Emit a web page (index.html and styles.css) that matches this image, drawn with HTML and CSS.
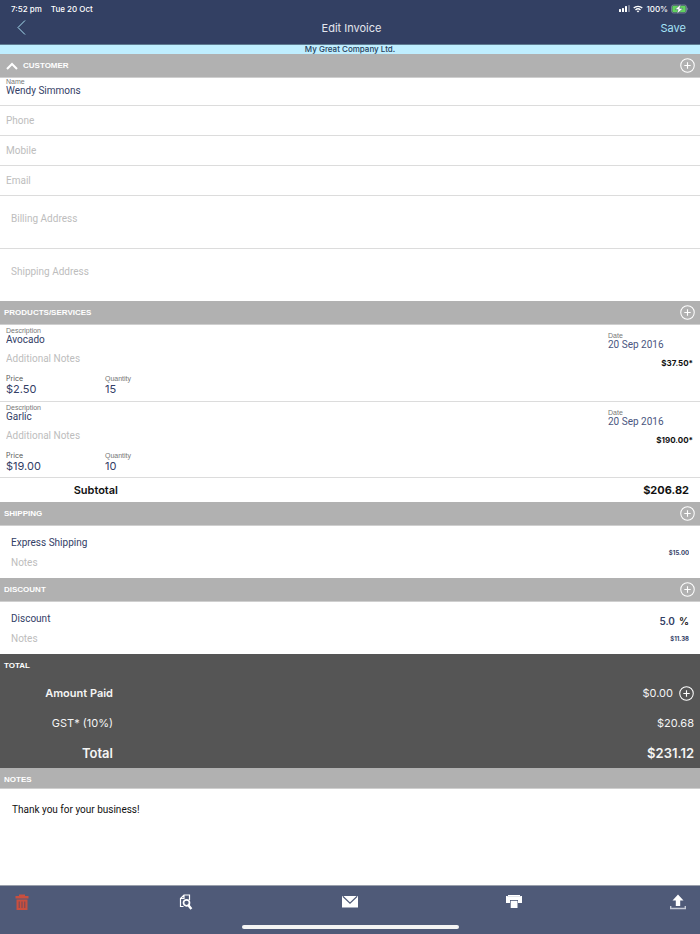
FILE: index.html
```html
<!DOCTYPE html>
<html lang="en">
<head>
    <meta charset="UTF-8">
    <meta name="viewport" content="width=device-width, initial-scale=1.0">
    <title>Edit Invoice</title>
    <link rel="stylesheet" href="styles.css">
</head>
<body>
    <!-- Shared icons -->
    <svg class="sprite" aria-hidden="true">
        <symbol id="icon-add" viewBox="0 0 16 16">
            <circle cx="8" cy="8" r="7.2" fill="none" stroke="currentColor" stroke-width="1.1"/>
            <path d="M8 4.6v6.8M4.6 8h6.8" stroke="currentColor" stroke-width="1.2"/>
        </symbol>
    </svg>

    <header class="header">
        <div class="status-bar">
            <span>7:52 pm</span>
            <span>Tue 20 Oct</span>
            <div class="status-right">
                <svg width="11" height="7" viewBox="0 0 11 7" fill="#fff">
                    <rect x="0" y="4" width="2" height="3" rx=".5"/>
                    <rect x="3" y="3" width="2" height="4" rx=".5"/>
                    <rect x="6" y="1" width="2" height="6" rx=".5"/>
                    <rect x="9" y="0" width="2" height="7" rx=".5" opacity=".3"/>
                </svg>
                <svg width="10" height="8" viewBox="0 0 10 8" fill="none" stroke="#fff" stroke-width="1.4">
                    <path d="M.7 3.1a6.1 6.1 0 0 1 8.6 0M2.5 4.9a3.6 3.6 0 0 1 5 0"/>
                    <path d="M5 7.6 3.7 6.2a1.9 1.9 0 0 1 2.6 0z" fill="#fff" stroke="none"/>
                </svg>
                <span>100%</span>
                <svg width="18" height="10" viewBox="0 0 18 10">
                    <rect x=".5" y="1" width="15" height="8" rx="2" fill="none" stroke="#8b93a8" stroke-width=".7"/>
                    <rect x="1.3" y="1.8" width="13.4" height="6.4" rx="1.2" fill="#62d35f"/>
                    <path d="M16.4 3.6c1 .4 1 2.4 0 2.8z" fill="#8b93a8"/>
                    <path d="M9.8.2 4 5.6h3.2L6 9.8l6-5.400H8.700z" fill="#fff" stroke="#334063" stroke-width=".4"/>
                </svg>
            </div>
        </div>
        <nav class="nav">
            <button type="button" class="back" aria-label="Back">
                <svg width="9" height="15" viewBox="0 0 9 15" fill="none" stroke="#a6dcf0"><path d="M8 .5 1 7.5l7 7"/></svg>
            </button>
            <h1>Edit Invoice</h1>
            <button type="submit" form="invoice" class="save">Save</button>
        </nav>
    </header>
    <div class="company">My Great Company Ltd.</div>

    <form id="invoice" class="invoice">
        <section>
            <div class="section-head">
                <button type="button" class="collapse" aria-label="Collapse customer">
                    <svg width="12" height="8" viewBox="0 0 12 8" fill="none" stroke="#fff" stroke-width="2"><path d="m1 7 5-5 5 5"/></svg>
                </button>
                <h2>CUSTOMER</h2>
                <button type="button" class="add" aria-label="Add customer"><svg><use href="#icon-add"/></svg></button>
            </div>
            <div class="row name-row">
                <label for="name">Name</label>
                <input type="text" id="name" value="Wendy Simmons">
            </div>
            <div class="row"><input type="tel" placeholder="Phone" aria-label="Phone"></div>
            <div class="row"><input type="tel" placeholder="Mobile" aria-label="Mobile"></div>
            <div class="row"><input type="email" placeholder="Email" aria-label="Email"></div>
            <div class="row address"><textarea rows="2" placeholder="Billing Address" aria-label="Billing Address"></textarea></div>
            <div class="row address"><textarea rows="2" placeholder="Shipping Address" aria-label="Shipping Address"></textarea></div>
        </section>

        <section>
            <div class="section-head">
                <h2>PRODUCTS/SERVICES</h2>
                <button type="button" class="add" aria-label="Add product"><svg><use href="#icon-add"/></svg></button>
            </div>
            <div class="item">
                <div class="item-main">
                    <label for="desc1">Description</label>
                    <input type="text" id="desc1" value="Avocado">
                    <input type="text" class="item-notes" placeholder="Additional Notes" aria-label="Additional Notes">
                    <div class="item-numbers">
                        <div class="field">
                            <label for="price1" class="price-label">Price</label>
                            <input type="text" id="price1" value="$2.50">
                        </div>
                        <div class="field">
                            <label for="qty1">Quantity</label>
                            <input type="text" id="qty1" value="15">
                        </div>
                    </div>
                </div>
                <div class="item-side">
                    <label for="date1">Date</label>
                    <input type="text" id="date1" value="20 Sep 2016">
                    <output class="item-amount">$37.50*</output>
                </div>
            </div>
            <div class="item">
                <div class="item-main">
                    <label for="desc2">Description</label>
                    <input type="text" id="desc2" value="Garlic">
                    <input type="text" class="item-notes" placeholder="Additional Notes" aria-label="Additional Notes">
                    <div class="item-numbers">
                        <div class="field">
                            <label for="price2" class="price-label">Price</label>
                            <input type="text" id="price2" value="$19.00">
                        </div>
                        <div class="field">
                            <label for="qty2">Quantity</label>
                            <input type="text" id="qty2" value="10">
                        </div>
                    </div>
                </div>
                <div class="item-side">
                    <label for="date2">Date</label>
                    <input type="text" id="date2" value="20 Sep 2016">
                    <output class="item-amount">$190.00*</output>
                </div>
            </div>
            <div class="subtotal">
                <span class="subtotal-label">Subtotal</span>
                <output>$206.82</output>
            </div>
        </section>

        <section>
            <div class="section-head">
                <h2>SHIPPING</h2>
                <button type="button" class="add" aria-label="Add shipping"><svg><use href="#icon-add"/></svg></button>
            </div>
            <div class="extra">
                <div class="extra-text">
                    <input type="text" value="Express Shipping" aria-label="Shipping">
                    <input type="text" placeholder="Notes" aria-label="Shipping notes">
                </div>
                <input type="text" class="small-amount" value="$15.00" aria-label="Shipping cost">
            </div>
        </section>

        <section>
            <div class="section-head">
                <h2>DISCOUNT</h2>
                <button type="button" class="add" aria-label="Add discount"><svg><use href="#icon-add"/></svg></button>
            </div>
            <div class="extra">
                <div class="extra-text">
                    <input type="text" value="Discount" aria-label="Discount">
                    <input type="text" placeholder="Notes" aria-label="Discount notes">
                </div>
                <div class="discount-values">
                    <div class="percent"><input type="text" value="5.0" aria-label="Discount percent"><span>%</span></div>
                    <output class="small-amount">$11.38</output>
                </div>
            </div>
        </section>

        <section class="total">
            <h2>TOTAL</h2>
            <div class="total-row">
                <span class="total-label medium">Amount Paid</span>
                <output>$0.00</output>
                <button type="button" class="add" aria-label="Add payment"><svg><use href="#icon-add"/></svg></button>
            </div>
            <div class="total-row">
                <span class="total-label">GST* (10%)</span>
                <output>$20.68</output>
            </div>
            <div class="total-row grand">
                <span class="total-label">Total</span>
                <output>$231.12</output>
            </div>
        </section>

        <section class="notes">
            <div class="section-head notes-head"><h2><label for="notes">NOTES</label></h2></div>
            <textarea id="notes">Thank you for your business!</textarea>
        </section>
    </form>

    <footer class="footer">
        <div class="toolbar">
            <button type="button" aria-label="Delete">
                <svg width="16" height="16" viewBox="0 0 16 16">
                    <path d="M5 .5h6V2h3.500v2.500h-13V2H5z" fill="#c94f3f"/>
                    <path d="M2.500 5.500h11V16h-11z" fill="#c94f3f"/>
                    <path d="M5.200 7.500V14M8 7.500V14M10.800 7.500V14" stroke="#6d4a5c" stroke-width="1"/>
                </svg>
            </button>
            <button type="button" aria-label="Preview">
                <svg width="16" height="16" viewBox="0 0 16 16" fill="none" stroke="#fff">
                    <path d="M5.500 12.500h-3V4.500L6 1h5.500v5M2.500 4.500H6V1" stroke-width="1.200"/>
                    <circle cx="8.500" cy="8.800" r="3" stroke-width="1.700"/>
                    <path d="m10.400 11.200 3 3.800" stroke-width="2.400"/>
                </svg>
            </button>
            <button type="button" aria-label="Email">
                <svg width="16" height="16" viewBox="0 0 16 16">
                    <path d="M0 2h16v11.500H0z" fill="#fff"/>
                    <path d="m.8 2.200 7.200 7 7.200-7" fill="none" stroke="#4f5a78" stroke-width="1.200"/>
                </svg>
            </button>
            <button type="button" aria-label="Print">
                <svg width="16" height="16" viewBox="0 0 16 16" fill="#fff">
                    <path d="M2 1h12v1h2v7h-4V6H4v3H0V2h2z"/>
                    <path d="M4.700 6.800h6.800v7.200H4.700z"/>
                    <path d="M1 2.500h14" stroke="#c5cad6" stroke-width=".5"/>
                </svg>
            </button>
            <button type="button" aria-label="Share">
                <svg width="16" height="16" viewBox="0 0 16 16">
                    <path d="m8 .5 5.500 6H10.200V12H5.800V6.500H2.500z" fill="#fff"/>
                    <path d="M.7 12v2.500h14.600V12" fill="none" stroke="#c5cad6" stroke-width="1.400"/>
                </svg>
            </button>
        </div>
        <div class="home-bar"></div>
    </footer>
</body>
</html>
```
FILE: styles.css
```css
* {
    box-sizing: border-box;
}
body {
    margin: 0;
    min-height: 100vh;
    display: flex;
    flex-direction: column;
    background: #fff;
    color: #111;
    font-family: Inter, "Liberation Sans", sans-serif;
    font-size: 10px;
    line-height: 12px;
}
h1, h2 {
    margin: 0;
}
button {
    display: flex;
    align-items: center;
    padding: 0;
    border: none;
    background: none;
    font: inherit;
    cursor: pointer;
}
input, textarea {
    display: block;
    width: 100%;
    padding: 0;
    border: none;
    background: none;
    color: #334066;
    font-family: Roboto, "Liberation Sans", sans-serif;
    font-size: 10px;
    line-height: 12px;
    outline: none;
    resize: none;
}
input {
    height: 12px;
}
::placeholder {
    color: #bdbdbd;
    opacity: 1;
}
label {
    display: block;
    color: #777;
    font-family: "Liberation Sans", Arial, sans-serif;
    font-size: 7px;
    line-height: 7px;
}
.sprite {
    display: none;
}

/* Header */
.header {
    background: #334063;
    color: #fff;
    padding-bottom: 6px;
    border-bottom: 1px solid #5f7d93;
}
.status-bar {
    display: flex;
    align-items: center;
    gap: 9px;
    height: 17px;
    padding: 0 11px;
    font-size: 8px;
    font-weight: 500;
}
.status-right {
    display: flex;
    align-items: center;
    gap: 3px;
    margin-left: auto;
}
.nav {
    display: grid;
    grid-template-columns: 1fr auto 1fr;
    align-items: center;
    height: 21px;
    padding: 0 14px 0 17px;
}
.nav h1 {
    color: #e3e6ee;
    font-size: 11px;
    font-weight: 400;
}
.save {
    justify-self: end;
    color: #a6e3f8;
    font-size: 11px;
}
.company {
    background: #bfeeff;
    color: #26405a;
    font-size: 8px;
    font-weight: 500;
    line-height: 9px;
    text-align: center;
}

/* Sections */
.invoice {
    display: flex;
    flex-direction: column;
    flex: 1;
}
.section-head {
    display: flex;
    align-items: center;
    height: 24px;
    padding: 0 5px 0 4px;
    background: #b1b1b1;
    border-bottom: 1px solid #cfcfcf;
}
h2, h2 label {
    color: #fff;
    font-family: "Liberation Sans", Arial, sans-serif;
    font-size: 8px;
    font-weight: 700;
    line-height: 10px;
}
.collapse {
    margin: 0 5px 0 2px;
}
.add {
    margin-left: auto;
    color: #fff;
}
.add svg {
    width: 15px;
    height: 15px;
}

/* Customer */
.row {
    display: flex;
    flex-direction: column;
    justify-content: center;
    height: 30px;
    padding: 0 6px;
    border-bottom: 1px solid #dcdcdc;
}
.name-row {
    height: 28px;
    justify-content: flex-start;
}
.address {
    height: 53px;
    justify-content: flex-end;
    padding: 0 11px;
}
.address textarea {
    height: 35px;
}
.address:last-child {
    height: 52px;
    border-bottom: none;
}

/* Products */
.item {
    display: flex;
    height: 77px;
    padding: 2px 7px 0 6px;
    border-bottom: 1px solid #dcdcdc;
}
.item + .item {
    height: 76px;
}
.item-main {
    flex: 1;
}
.item-notes {
    margin: 7px 0 10px;
}
.item-numbers {
    display: flex;
    align-items: flex-end;
    gap: 19px;
}
.field {
    width: 80px;
}
.field input {
    height: 13px;
    font-family: Inter, "Liberation Sans", sans-serif;
    font-size: 11px;
}
.price-label {
    color: #555;
    font-family: Inter, "Liberation Sans", sans-serif;
}
.item-side {
    width: 85px;
    padding-top: 5px;
}
.item-side input {
    color: #4a5680;
}
.item-amount {
    display: block;
    margin-top: 6px;
    font-size: 8px;
    font-weight: 700;
    text-align: right;
}
.subtotal {
    display: flex;
    align-items: center;
    justify-content: space-between;
    height: 24px;
    padding-right: 11px;
    font-size: 11px;
    font-weight: 600;
}
.subtotal-label {
    width: 118px;
    text-align: right;
}
.subtotal output {
    font-weight: 700;
}

/* Shipping and discount */
.extra {
    display: flex;
    align-items: center;
    height: 52px;
    padding: 2px 11px 0;
}
.extra-text {
    display: flex;
    flex: 1;
    flex-direction: column;
    gap: 8px;
}
.small-amount {
    width: 60px;
    color: #334066;
    font-family: Inter, "Liberation Sans", sans-serif;
    font-size: 6px;
    font-weight: 700;
    text-align: right;
}
.discount-values {
    display: flex;
    flex-direction: column;
    align-items: flex-end;
    gap: 6px;
    padding-top: 2px;
}
.percent {
    display: flex;
    gap: 4px;
    font-weight: 600;
}
.percent input {
    width: 40px;
    font-family: inherit;
    font-weight: 600;
    text-align: right;
}

/* Total */
.total {
    height: 114px;
    padding: 7px 6px 0 4px;
    background: #555;
    color: #f4f4f4;
}
.total h2 {
    margin-bottom: 7px;
}
.total-row {
    display: flex;
    align-items: center;
    height: 30px;
    font-size: 11px;
}
.total-row output {
    margin-left: auto;
}
.total-row .add {
    margin-left: 6px;
}
.total-label {
    width: 109px;
    text-align: right;
}
.medium {
    font-weight: 600;
}
.grand {
    font-size: 13px;
    font-weight: 600;
}

/* Notes */
.notes {
    display: flex;
    flex: 1;
    flex-direction: column;
}
.notes-head {
    height: 21px;
    padding-top: 3px;
}
.notes textarea {
    flex: 1;
    min-height: 60px;
    padding: 15px 12px;
    color: #111;
}

/* Bottom toolbar */
.footer {
    height: 49px;
    padding-top: 8px;
    background: #4f5a78;
    border-top: 1px solid #9aa0ac;
}
.toolbar {
    display: flex;
    justify-content: space-between;
    padding: 0 14px;
}
.toolbar svg {
    display: block;
}
.home-bar {
    width: 31%;
    height: 4px;
    margin: 15px auto 0;
    border-radius: 2px;
    background: #f4f4f4;
}
```
